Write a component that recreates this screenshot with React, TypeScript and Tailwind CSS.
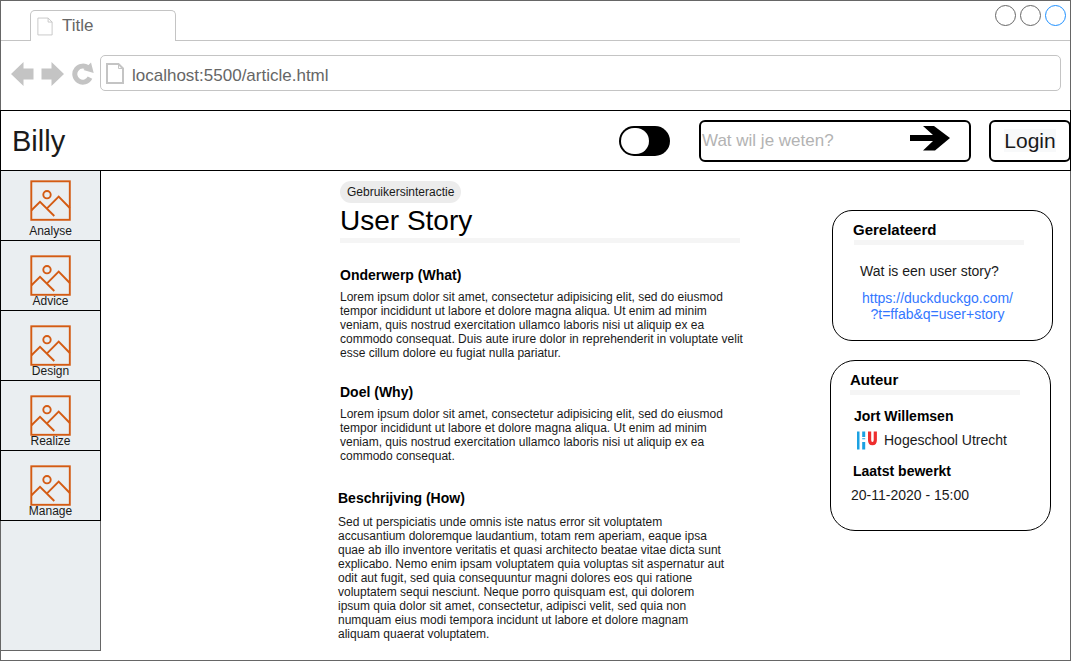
import React from "react";

const steps = [
  { name: "Analyse", pad: "pt-[9px]" },
  { name: "Advice", pad: "pt-[14px]" },
  { name: "Design", pad: "pt-[14px]" },
  { name: "Realize", pad: "pt-[14px]" },
  { name: "Manage", pad: "pt-[14px]" },
];

function PageIcon({ className, weight }: { className: string; weight: number }) {
  return (
    <svg viewBox="0 0 18 21" className={className} fill="none" stroke="#c4c4c4" strokeWidth={weight} aria-hidden="true">
      <path d="M1 1H12.500L17 5.500V20H1Z" />
      <path d="M12.500 1V5.500H17" strokeWidth="1" />
    </svg>
  );
}

function PictureIcon() {
  return (
    <svg viewBox="0 0 41 41" className="size-[41px] shrink-0" fill="none" stroke="#d45b13" strokeWidth="1.900" aria-hidden="true">
      <rect x="1.300" y="1.300" width="38.500" height="38.500" />
      <circle cx="17" cy="14.700" r="3.700" />
      <path d="M1.500 30.200L10 21.800L24.300 36M17 28.300L28.700 16.700L39.800 28" />
    </svg>
  );
}

function HuLogo() {
  return (
    <svg viewBox="0 0 21 19" className="h-[19px] w-[21px] shrink-0" aria-hidden="true">
      <path fill="#1ba1e2" d="M1 0.500H3.500V18.500H1ZM6.200 0.500H9.200V6H6.200ZM6.200 7.200H9.200V8.200H6.200ZM6.200 11H9.200V18.500H6.200Z" />
      <path fill="none" stroke="#ee2e2e" strokeWidth="3.200" d="M13.600 0.500V9Q13.600 12.700 16.400 12.700Q19.300 12.700 19.300 9V0.500" />
    </svg>
  );
}

function Browser() {
  return (
    <>
      <div className="flex h-10 items-end">
        <div className="w-[29px] self-stretch border-b border-[#c4c4c4]" />
        <div className="flex h-[31px] w-[146px] items-center gap-[9px] rounded-t-[5px] border-x border-t border-[#c4c4c4] pl-1.5 text-[17px] leading-5 text-[#666]">
          <PageIcon className="h-[19px] w-4" weight={1} />
          <span>Title</span>
        </div>
        <div className="flex flex-1 justify-end gap-1 self-stretch border-b border-[#c4c4c4] pt-1 pr-1">
          <button aria-label="Minimaliseren" className="size-[21px] rounded-full border border-[#666]" />
          <button aria-label="Maximaliseren" className="size-[21px] rounded-full border border-[#666]" />
          <button aria-label="Sluiten" className="size-[21px] rounded-full border border-[#1e90ff]" />
        </div>
      </div>
      <div className="flex items-center pt-3.5 pr-[9px] pb-[19px] pl-2.5">
        <button aria-label="Terug" className="mr-[7px] pt-0.5">
          <svg viewBox="0 0 23 24" className="h-6 w-[23px]" fill="#c4c4c4"><path d="M0 12L12.500 0V6.500H22.500V17.500H12.500V24Z" /></svg>
        </button>
        <button aria-label="Vooruit" className="mr-2 pt-0.5">
          <svg viewBox="0 0 23 24" className="h-6 w-[23px]" fill="#c4c4c4"><path d="M23 12L10.500 0V6.500H0.500V17.500H10.500V24Z" /></svg>
        </button>
        <button aria-label="Vernieuwen" className="mr-1.5 pt-0.5">
          <svg viewBox="0 0 22 24" className="h-6 w-[22px]" fill="none">
            <path d="M16.500 6.500A8 8 0 1 0 18 15.600" stroke="#c4c4c4" strokeWidth="5" />
            <path d="M19 0.500L21.700 11L11.500 8Z" fill="#c4c4c4" />
          </svg>
        </button>
        <label className="flex h-9 flex-1 items-center gap-2 rounded-[5px] border border-[#c4c4c4] pl-[5px] text-[17px] leading-5 text-[#666]">
          <PageIcon className="h-[21px] w-[18px]" weight={2} />
          <input aria-label="Adres" defaultValue="localhost:5500/article.html" className="min-w-0 flex-1 pt-1.5 outline-none" />
        </label>
      </div>
    </>
  );
}

function Header() {
  return (
    <header className="-mx-px flex h-[61px] items-center border border-black pl-2.5">
      <a href="#" className="mr-auto pl-px text-[29px] leading-8">Billy</a>
      <button role="switch" aria-checked="false" aria-label="Donkere modus" className="mr-[29px] h-[30px] w-[51px] rounded-full bg-black p-0.5">
        <span className="block h-[26px] w-7 rounded-full bg-white" />
      </button>
      <form className="mr-[18px] flex h-[42px] w-[272px] items-center rounded-[6px] border-2 border-black pr-[19px] pl-px">
        <input aria-label="Zoeken" placeholder="Wat wil je weten?" className="min-w-0 flex-1 text-[17px] leading-5 outline-none placeholder:text-[#b3b3b3]" />
        <button type="button" aria-label="Zoek" className="pb-1">
          <svg viewBox="0 0 40 25" className="h-[25px] w-10"><path d="M0 9H23L13 0H24L40 12L25 24.500H13L23 15H0Z" /></svg>
        </button>
      </form>
      <button className="-mr-px h-[42px] w-[82px] rounded-[6px] border-2 border-black text-[21px] leading-6">
        <span className="bg-[#f8f9fa]">Login</span>
      </button>
    </header>
  );
}

function Section({ title, children }: { title: string; children: React.ReactNode }) {
  return (
    <section>
      <h2 className="text-sm leading-4 font-bold text-black">{title}</h2>
      {children}
    </section>
  );
}

export default function App() {
  return (
    <div className="min-h-screen bg-white pr-px font-['Liberation_Sans',Arial,sans-serif] text-[#1a1a1a]">
      <div className="flex min-h-screen flex-col border border-[#666]">
        <Browser />
        <Header />
        <div className="flex flex-1">
          <nav className="-ml-px flex w-[101px] shrink-0 flex-col bg-[#eaeef1] bg-clip-content pb-[9px]">
            <ul>
              {steps.map((s) => (
                <li key={s.name} className="border-x border-b border-black">
                  <a href="#" className={`flex h-[69px] flex-col items-center justify-between pb-1 ${s.pad}`}>
                    <PictureIcon />
                    <span className="text-xs leading-[10px]">{s.name}</span>
                  </a>
                </li>
              ))}
            </ul>
            <div className="flex-1 border-x border-b border-[#666]" />
          </nav>
          <div className="flex flex-1 justify-end gap-20 pr-[17px]">
            <main className="w-[412px] pt-2.5 pb-[19px] text-xs leading-[14px]">
              <div className="pl-0.5">
                <span className="block w-fit rounded-full bg-[#ececec] px-[7px] py-1">Gebruikersinteractie</span>
                <h1 className="mt-0.5 text-[28px] leading-8 text-black">User Story</h1>
                <div className="mt-px mb-6 h-[5px] w-[400px] bg-[#f5f5f5]" />
                <Section title="Onderwerp (What)">
                  <p className="mt-[7px] mb-6">
                    Lorem ipsum dolor sit amet, consectetur adipisicing elit, sed do eiusmod tempor incididunt ut labore et dolore magna aliqua. Ut enim ad minim veniam, quis nostrud exercitation ullamco laboris nisi ut aliquip ex ea commodo consequat. Duis aute irure dolor in reprehenderit in voluptate velit esse cillum dolore eu fugiat nulla pariatur.
                  </p>
                </Section>
                <Section title="Doel (Why)">
                  <p className="mt-[7px] mb-[27px]">
                    Lorem ipsum dolor sit amet, consectetur adipisicing elit, sed do eiusmod tempor incididunt ut labore et dolore magna aliqua. Ut enim ad minim veniam, quis nostrud exercitation ullamco laboris nisi ut aliquip ex ea commodo consequat.
                  </p>
                </Section>
              </div>
              <Section title="Beschrijving (How)">
                <p className="mt-[9px] w-[390px]">
                  Sed ut perspiciatis unde omnis iste natus error sit voluptatem accusantium doloremque laudantium, totam rem aperiam, eaque ipsa quae ab illo inventore veritatis et quasi architecto beatae vitae dicta sunt explicabo. Nemo enim ipsam voluptatem quia voluptas sit aspernatur aut odit aut fugit, sed quia consequuntur magni dolores eos qui ratione voluptatem sequi nesciunt. Neque porro quisquam est, qui dolorem ipsum quia dolor sit amet, consectetur, adipisci velit, sed quia non numquam eius modi tempora incidunt ut labore et dolore magnam aliquam quaerat voluptatem.
                </p>
              </Section>
            </main>
            <aside className="flex w-[223px] flex-col gap-[19px] pt-[39px] text-sm leading-4">
              <section className="w-[221px] self-end rounded-[20px] border border-black px-5 pt-2.5 pb-[18px]">
                <h2 className="text-[15px] leading-[17px] font-bold text-black">Gerelateerd</h2>
                <div className="mt-0.5 ml-px h-[5px] w-[170px] bg-[#f5f5f5]" />
                <p className="mt-[18px] pl-[7px]">Wat is een user story?</p>
                <a href="#" className="mt-[11px] ml-2 block w-[153px] text-center text-[#3377ff]">
                  https://duckduckgo.com/<br />?t=ffab&amp;q=user+story
                </a>
              </section>
              <section className="w-[221px] rounded-[25px] border border-black px-[19px] pt-2.5 pb-[27px]">
                <h2 className="text-[15px] leading-[17px] font-bold text-black">Auteur</h2>
                <div className="mt-0.5 h-[5px] w-[170px] bg-[#f5f5f5]" />
                <p className="mt-[13px] pl-1 font-bold text-black">Jort Willemsen</p>
                <p className="mt-[5px] flex h-[22px] items-center gap-[7px] pl-1.5">
                  <HuLogo />
                  Hogeschool Utrecht
                </p>
                <h3 className="mt-3 pl-[3px] font-bold text-black">Laatst bewerkt</h3>
                <p className="mt-2 pl-px">20-11-2020 - 15:00</p>
              </section>
            </aside>
          </div>
        </div>
      </div>
    </div>
  );
}
